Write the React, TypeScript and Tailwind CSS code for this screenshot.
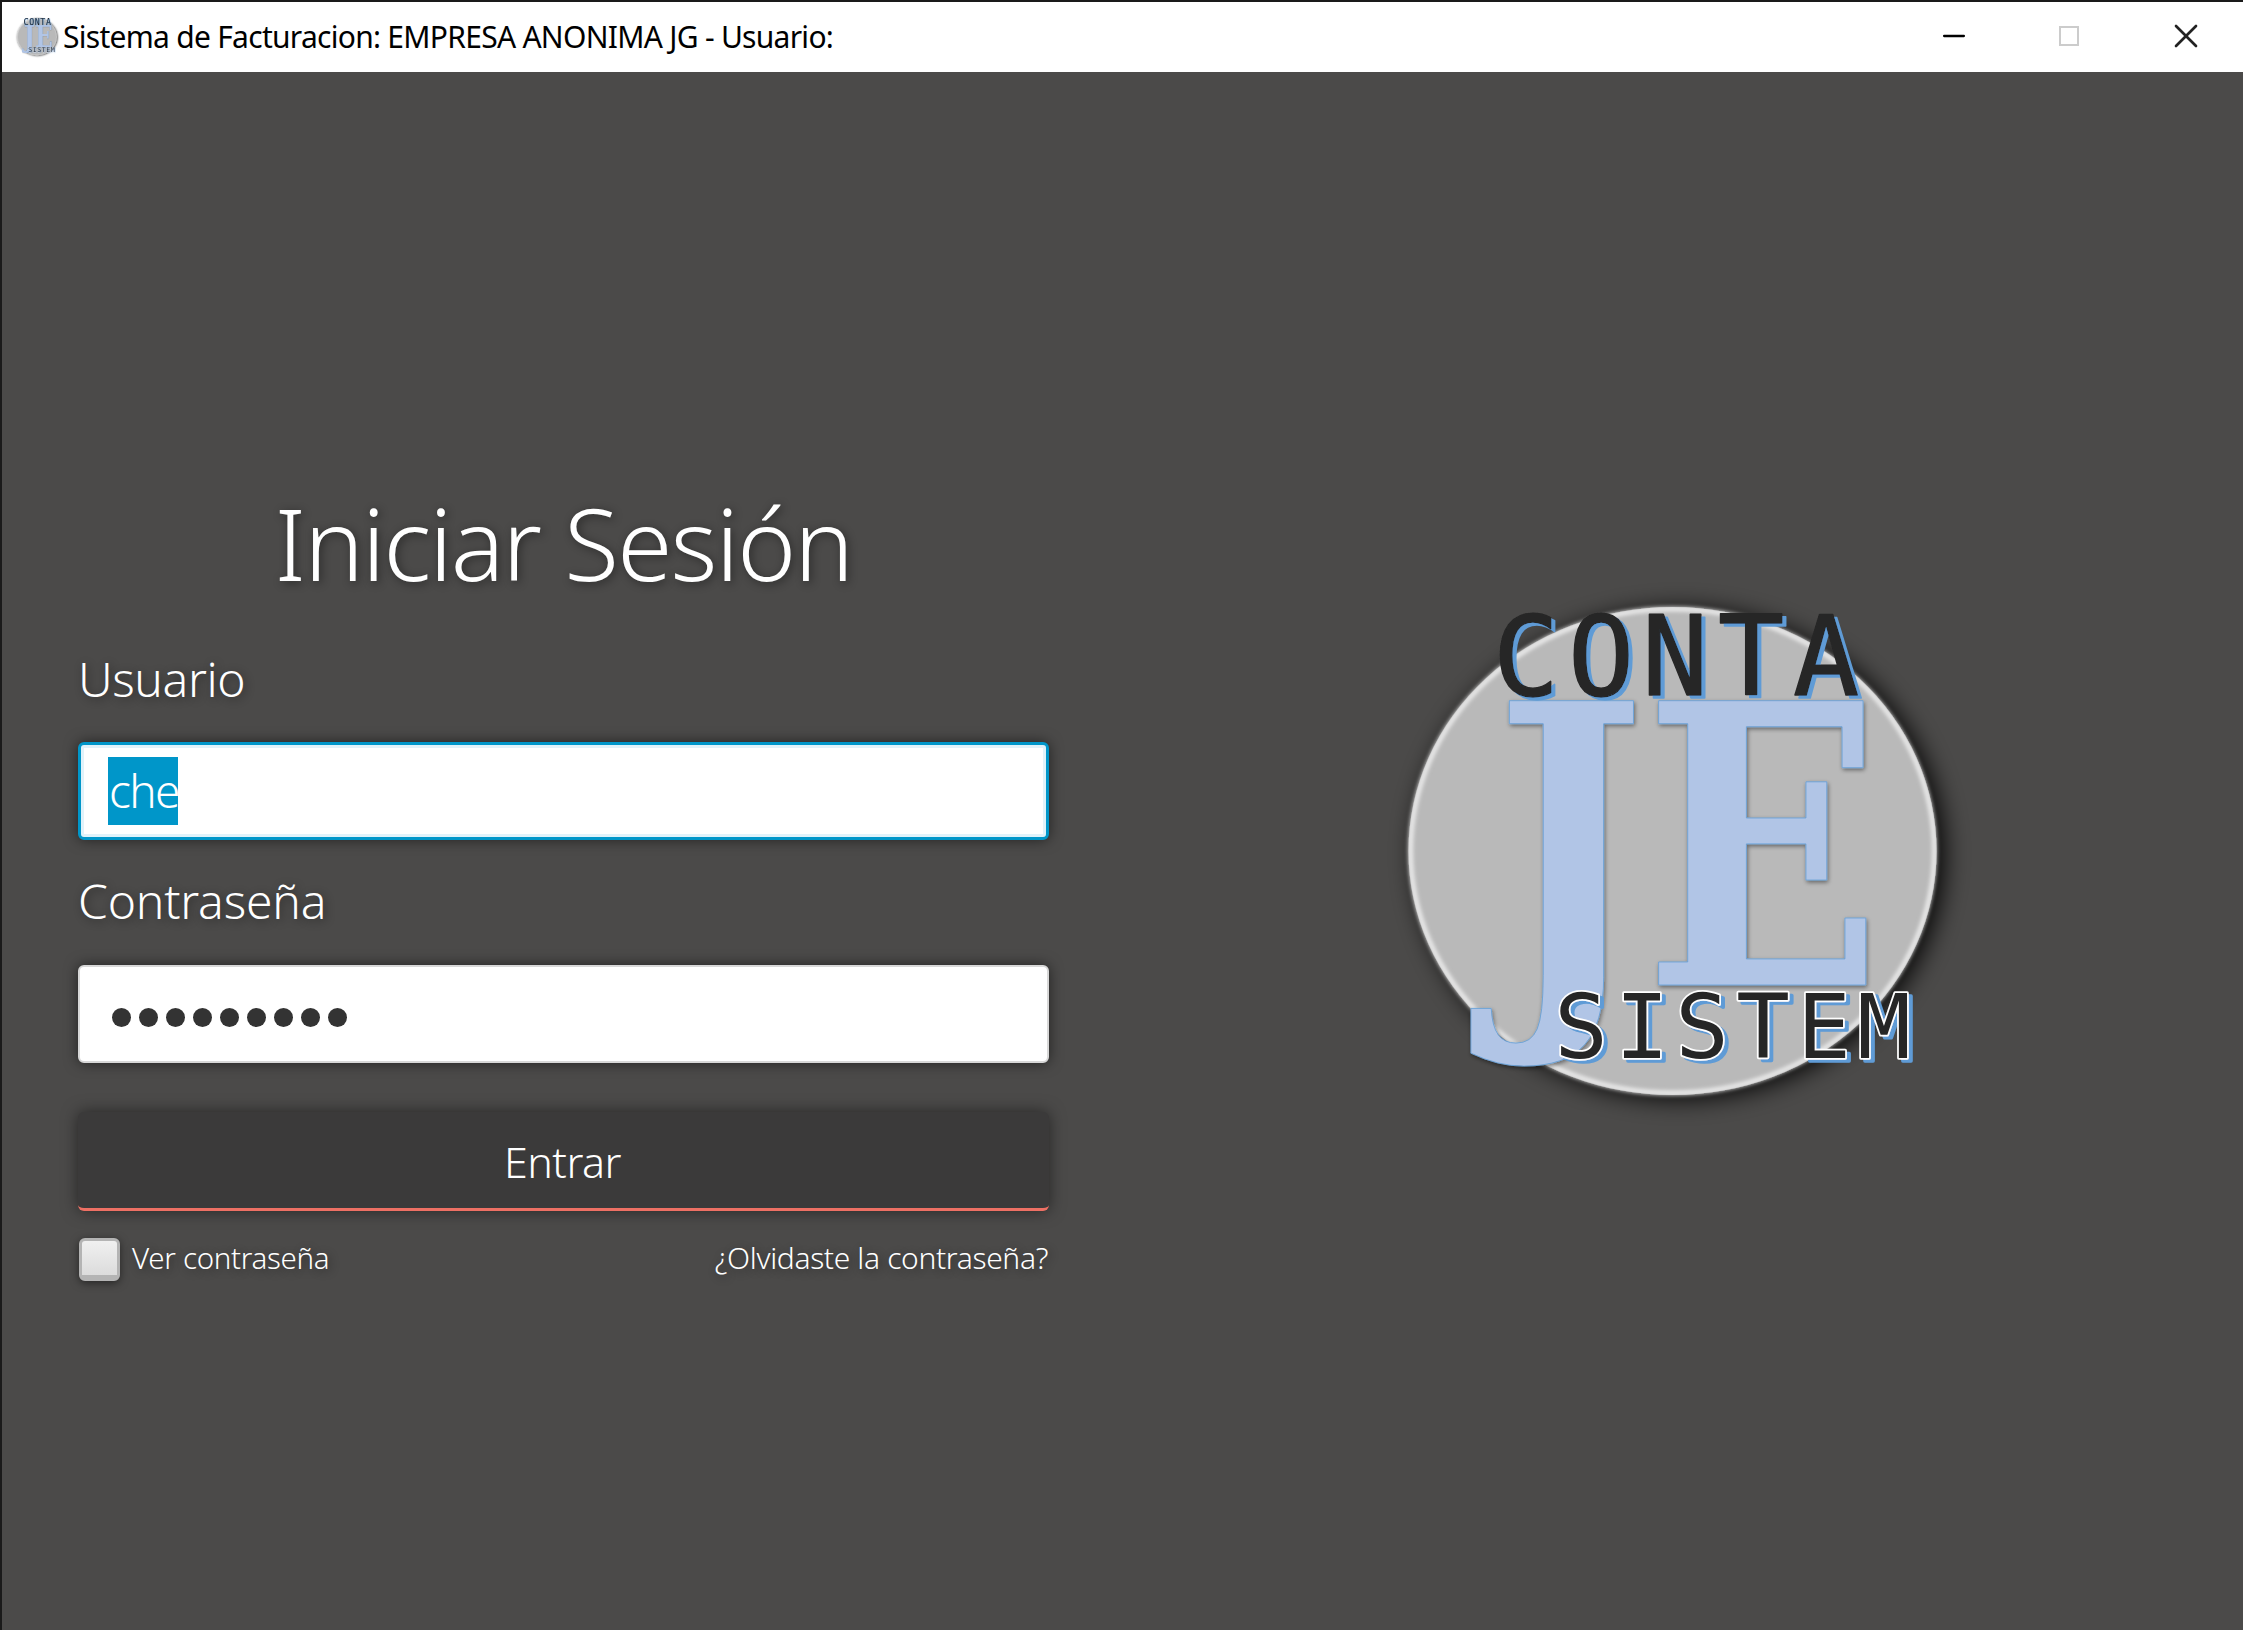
import { Minus, X } from 'lucide-react';

function Logo({ className }: { className: string }) {
  return (
    <svg viewBox="1395 596 555 510" className={`${className} overflow-visible`}>
      <defs>
        <filter id="circleShadow" x="-20%" y="-20%" width="140%" height="140%">
          <feDropShadow dx="7" dy="3" stdDeviation="13" floodColor="#000" floodOpacity="1" />
        </filter>
        <filter id="rimBlur" x="-10%" y="-10%" width="120%" height="120%">
          <feGaussianBlur stdDeviation="2" />
        </filter>
        <filter id="letterShadow" x="-20%" y="-20%" width="140%" height="140%">
          <feDropShadow dx="1" dy="2" stdDeviation="2" floodColor="#000" floodOpacity="0.45" />
        </filter>
        <filter id="blueEdge" x="-5%" y="-10%" width="110%" height="120%">
          <feDropShadow dx="4" dy="3" stdDeviation="0" floodColor="#5f9bd6" />
        </filter>
      </defs>
      <ellipse cx="1672.5" cy="851" rx="264" ry="244" fill="#b9b9b9" filter="url(#circleShadow)" />
      <ellipse cx="1672.5" cy="851" rx="262" ry="242" fill="none" stroke="#f6f6f6" strokeWidth="4" filter="url(#rimBlur)" />
      <g filter="url(#letterShadow)" fill="#b1c5e6" stroke="#6aa2d8" strokeWidth="1" fontFamily="'DejaVu Serif', serif" fontWeight="bold" fontSize="390">
        <text transform="translate(1570 985) scale(0.82 1)" textAnchor="middle">J</text>
        <text transform="translate(1644 985) scale(0.8 1)">E</text>
      </g>
      <text
        x="1526 1601 1675 1751 1826"
        y="695"
        textAnchor="middle"
        fontFamily="'DejaVu Sans Mono', monospace"
        fontSize="110"
        fill="#262626"
        stroke="#262626"
        strokeWidth="1.5"
        strokeLinejoin="round"
        filter="url(#blueEdge)"
      >
        CONTA
      </text>
      <text
        x="1581 1642 1702 1763 1824 1884"
        y="1058"
        textAnchor="middle"
        fontFamily="'DejaVu Sans Mono', monospace"
        fontSize="89"
        fill="#262626"
        stroke="#fff"
        strokeWidth="3.5"
        strokeLinejoin="round"
        paintOrder="stroke"
        filter="url(#blueEdge)"
      >
        SISTEM
      </text>
    </svg>
  );
}

export default function App() {
  return (
    <div className="h-screen w-full overflow-hidden flex flex-col bg-[#4b4a49] border-t-2 border-l-2 border-[#1a1a1a] font-['Noto_Sans',sans-serif]">
      <div className="h-[70px] shrink-0 bg-white flex items-center pl-[14px] text-black">
        <Logo className="w-[42px] h-[38px] shrink-0" />
        <span className="ml-[5px] text-[30px] tracking-[-0.72px] leading-none">Sistema de Facturacion: EMPRESA ANONIMA JG - Usuario:</span>
        <div className="ml-auto mb-[2px] flex items-center">
          <Minus className="w-[34px] h-[34px] mr-[88px] text-black" strokeWidth={1.6} absoluteStrokeWidth />
          <div className="w-[20px] h-[20px] border-2 border-[#cccccc] mr-[87px]" />
          <X className="w-[40px] h-[40px] mr-[37px] text-[#222222]" strokeWidth={1.6} absoluteStrokeWidth />
        </div>
      </div>

      <div className="flex-1 flex">
        <div className="w-[971px] ml-[76px] mr-[1px] shrink-0 pt-[420px] text-white flex flex-col [text-shadow:2px_2px_10px_rgba(0,0,0,0.45)]">
          <h1 className="text-center text-[100px] font-[350] leading-none h-[110px] tracking-[-1.8px]">Iniciar Sesión</h1>
          <label className="mt-[45px] text-[48px] font-[350] leading-[64px] tracking-[-0.4px]">Usuario</label>
          <div className="mt-[31px] h-[98px] rounded-[6px] border-[3px] border-[#0096c9] bg-white shadow-[0_0_14px_rgba(0,0,0,0.55),inset_0_0_0_3px_#e0f2fa] flex items-center pl-[27px] [text-shadow:none]">
            <span className="h-[68px] bg-[#0096c9] text-white text-[46px] font-[350] leading-[66px] tracking-[-1.6px] w-[70px] pl-[1px] whitespace-nowrap">che</span>
          </div>
          <label className="mt-[29px] text-[48px] font-[350] leading-[64px] tracking-[-0.2px]">Contraseña</label>
          <div className="mt-[32px] h-[98px] rounded-[6px] border-2 border-[#d8d8d8] bg-white shadow-[0_0_14px_rgba(0,0,0,0.55)] flex items-center pl-[32px] gap-[8px]">
            {Array.from({ length: 9 }).map((_, i) => (
              <span key={i} className="w-[19px] h-[19px] rounded-full bg-[#333333] mt-[6px]" />
            ))}
          </div>
          <button className="mt-[49px] h-[99px] rounded-[6px] bg-[#3b3a3a] border-b-[3px] border-[#ee7064] shadow-[0_0_16px_rgba(0,0,0,0.5)] text-[43px] font-[350] text-white tracking-[-0.5px]">
            <span className="relative top-[2px] right-[1px]">Entrar</span>
          </button>
          <div className="mt-[27px] flex items-center">
            <span className="w-[41px] h-[43px] ml-[1px] rounded-[6px] border-[3px] border-[#b4b4b4] border-b-[6px] bg-gradient-to-b from-[#f0f0f0] to-[#dcdcdc] shadow-[0_2px_8px_rgba(0,0,0,0.5)]" />
            <span className="ml-[12px] text-[29.5px] font-[350] leading-none tracking-[-0.3px] mb-[3px]">Ver contraseña</span>
            <a className="ml-auto mr-[1px] text-[30px] font-[350] leading-none tracking-[-0.35px] mb-[3px]">¿Olvidaste la contraseña?</a>
          </div>
        </div>
        <div className="flex-1 pl-[345px] pt-[524px]">
          <Logo className="w-[555px] h-[510px]" />
        </div>
      </div>
    </div>
  );
}
